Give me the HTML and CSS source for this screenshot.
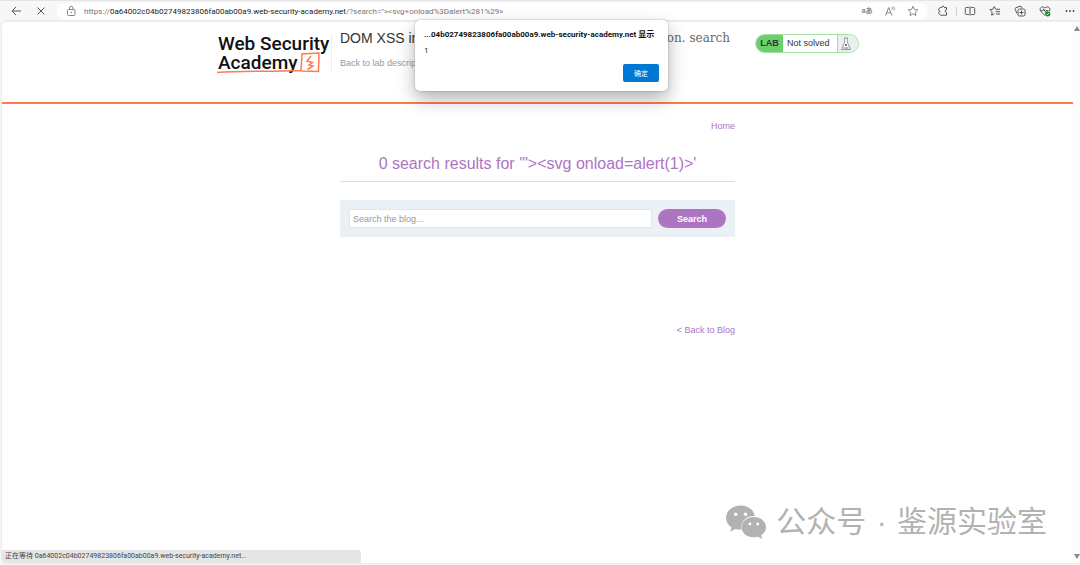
FILE: index.html
```html
<!DOCTYPE html>
<html lang="en">
<head>
    <meta charset="UTF-8">
    <meta name="viewport" content="width=device-width, initial-scale=1.0">
    <title>Web Security Academy</title>
    <link rel="stylesheet" href="styles.css">
</head>
<body>
    <div class="toolbar">
        <button class="tool back" aria-label="Back">
            <svg class="icon" viewBox="0 0 12 12"><path d="M11 6H2M6 2L2 6l4 4"/></svg>
        </button>
        <button class="tool stop" aria-label="Stop">
            <svg class="icon" viewBox="0 0 12 12"><path d="M2.500 2.500l7 7M9.500 2.500l-7 7"/></svg>
        </button>
        <div class="address">
            <svg class="icon lock" viewBox="0 0 12 12"><rect x="2.500" y="4.500" width="7.500" height="6" rx="1"/><path d="M4.500 4.500V3a1.700 1.700 0 0 1 3.400 0v1.500"/><circle cx="6.200" cy="7.500" r=".4"/></svg>
            <a class="url" href="#">https://<b>0a64002c04b02749823806fa00ab00a9.web-security-academy.net</b>/?search="&gt;&lt;svg+onload%3Dalert%281%29&gt;</a>
            <button class="tool translate" aria-label="Translate">aあ</button>
            <button class="tool" aria-label="Read aloud">
                <svg class="icon" viewBox="0 0 12 12"><path d="M1.500 10.500L4.700 2.500l3.300 8M2.500 7.800h4.500M7.500 2.300c.8.500.9 1.500.5 2.200M9 1.300c1.400 1 1.500 2.800.8 4"/></svg>
            </button>
            <button class="tool" aria-label="Favorite">
                <svg class="icon" viewBox="0 0 12 12"><path d="M6 1.300l1.400 3.100 3.400.4-2.500 2.300.7 3.400-3-1.700-3 1.700.7-3.400L1.200 4.800l3.400-.4z"/></svg>
            </button>
        </div>
        <div class="tools">
            <button class="tool" aria-label="Extensions">
                <svg class="icon" viewBox="0 0 12 12"><path d="M3 2.500h1.700c0-1.700 2.600-1.700 2.600 0h2.200v2.300c-1.800 0-1.800 2.600 0 2.600v2.800H3.500L1.800 8.500V7.200M3 2.500L1.700 4v1.200c1.600-.2 1.600 2 0 2"/></svg>
            </button>
            <span class="separator"></span>
            <button class="tool" aria-label="Split screen">
                <svg class="icon" viewBox="0 0 12 12"><path d="M4.800 2.500H2.300a1 1 0 0 0-1 1v5a1 1 0 0 0 1 1h2.500M7.200 2.500h2.500a1 1 0 0 1 1 1v5a1 1 0 0 1-1 1H7.200M6 1.300v9.400"/></svg>
            </button>
            <button class="tool" aria-label="Favorites">
                <svg class="icon" viewBox="0 0 12 12"><path d="M6.700 4.300L5.200 1.500 3.900 4.200.9 4.700l2.200 2.200-.4 3.300 2.600-1.400M7 4.300h4M6.500 6.700H11M7 9h4"/></svg>
            </button>
            <button class="tool" aria-label="Collections">
                <svg class="icon" viewBox="0 0 12 12"><path d="M3 8.500L1.200 4.400a1.300 1.300 0 0 1 .7-1.700L6 1.300a1.300 1.300 0 0 1 1.600.7l.4 1M7.500 5.500v4M5.500 7.500h4"/><rect x="4" y="4" width="7" height="7" rx="1.500"/></svg>
            </button>
            <button class="tool" aria-label="Browser essentials">
                <svg class="icon" viewBox="0 0 12 12"><path d="M6 10.500L1.600 6.200C-.3 3.800 3 .2 6 3c3-2.800 6.200.6 4.500 3M1.500 5.700h2.300l1-1.800 1.400 3 1-1.400h2"/><circle class="badge" cx="8.700" cy="8.800" r="2.600"/><path class="tick" d="M7.500 8.800l.9.900 1.500-1.600"/></svg>
            </button>
            <button class="tool" aria-label="More">
                <svg class="icon dots" viewBox="0 0 12 12"><circle cx="2.500" cy="6" r=".9"/><circle cx="6" cy="6" r=".9"/><circle cx="9.500" cy="6" r=".9"/></svg>
            </button>
        </div>
    </div>

    <div class="viewport">
        <div class="page">
            <header class="lab-header">
                <div class="lab-header-inner">
                    <a class="logo" href="#">
                        <span>Web Security</span>
                        <span>Academy</span>
                        <svg class="logo-mark" viewBox="0 0 112 22" aria-hidden="true"><path d="M1 20.500C28 18.500 52 20 85 18.500L86 2l17-1-.5 18.500L85 19"/><path d="M95 4l-4 5 5.500 1.500L93 13l4 1-5.500 3.500"/></svg>
                    </a>
                    <div class="title-container">
                        <h2><span>DOM XSS in</span><code>on. search</code></h2>
                        <a class="back-link" href="#">Back to lab descrip</a>
                    </div>
                    <div class="lab-status">
                        <span class="lab-tag">LAB</span>
                        <p>Not solved</p>
                        <span class="flask">
                            <svg viewBox="0 0 12 14"><path d="M4 1h4M4.700 1v4L1.500 12.500h9L7.300 5V1"/><path class="bubbles" d="M5 7l2 2M7 7L5 9M3.500 11h5"/></svg>
                        </span>
                    </div>
                </div>
            </header>
            <main class="container">
                <nav class="top-links"><a href="#">Home</a></nav>
                <section class="blog-header">
                    <h1>0 search results for '"&gt;&lt;svg onload=alert(1)&gt;'</h1>
                </section>
                <form class="search">
                    <input type="text" name="search" placeholder="Search the blog..." aria-label="Search the blog">
                    <button type="submit">Search</button>
                </form>
                <div class="back-to-blog"><a href="#">&lt; Back to Blog</a></div>
            </main>
        </div>
        <div class="scrollbar">
            <svg viewBox="0 0 6 5"><path d="M3 0l3 5H0z"/></svg>
            <svg viewBox="0 0 6 5"><path d="M0 0h6L3 5z"/></svg>
        </div>
        <div class="status-bubble">正在等待 0a64002c04b02749823806fa00ab00a9.web-security-academy.net...</div>
        <div class="watermark">
            <svg viewBox="0 0 42 34"><path d="M15 0C6.500 0 0 5.600 0 12.700c0 4 2.100 7.400 5.600 9.800L4.300 27l5.200-2.800c2 .6 4 .8 6.400.8C14 17 21 10.500 29.500 11 28.500 4.500 22.500 0 15 0z"/><path d="M28.500 12C21.500 12 16 16.500 16 22.300s5.500 10.400 12.500 10.400c1.500 0 3-.2 4.300-.6l4.400 2.200-1.200-3.700c3-2 5-4.800 5-8.300C41 16.500 35.500 12 28.500 12z"/><g class="eyes"><circle cx="10" cy="9" r="1.800"/><circle cx="20" cy="9" r="1.800"/><circle cx="24.500" cy="19" r="1.500"/><circle cx="32.500" cy="19" r="1.500"/></g></svg>
            <span>公众号<span class="dot"> · </span>鉴源实验室</span>
        </div>
    </div>

    <div class="dialog" role="alertdialog" aria-labelledby="dialog-title">
        <strong id="dialog-title">...04b02749823806fa00ab00a9.web-security-academy.net 显示</strong>
        <p>1</p>
        <button>确定</button>
    </div>
</body>
</html>
```
FILE: styles.css
```css
:root {
    --chrome: #f7f7f7;
    --purple: #ad74c3;
    --orange: #ff7a51;
    --ui-font: Roboto, "Noto Sans CJK SC", sans-serif;
}

* {
    box-sizing: border-box;
}

body {
    margin: 0;
    height: 100vh;
    display: flex;
    flex-direction: column;
    position: relative;
    overflow: hidden;
    background: var(--chrome);
    font-family: "Liberation Sans", Arial, sans-serif;
    font-size: 9px;
}

h1, h2, p {
    margin: 0;
    font-weight: normal;
}

a {
    color: var(--purple);
    text-decoration: none;
}

button {
    border: 0;
    padding: 0;
    cursor: pointer;
}

/* browser toolbar */
.toolbar {
    height: 21px;
    display: flex;
    align-items: center;
    padding: 0 4px 0 10px;
    border-top: 1px solid #e6e6e6;
}

.tool {
    width: 12px;
    height: 12px;
    background: none;
    display: flex;
    align-items: center;
    justify-content: center;
    flex: none;
}

.stop {
    margin: 0 10px 0 13px;
}

.icon {
    width: 12px;
    height: 12px;
    flex: none;
    fill: none;
    stroke: #555;
    stroke-width: 1;
}

.dots {
    fill: #444;
    stroke: none;
}

.badge {
    fill: #138a1c;
    stroke: none;
}

.tick {
    stroke: #fff;
}

.address {
    flex: 1;
    display: flex;
    align-items: center;
    gap: 11px;
    height: 17px;
    padding: 0 9px 0 8px;
    background: #fff;
    border-radius: 9px;
}

.address .icon {
    stroke: #888;
}

.url {
    flex: 1;
    margin-left: -4px;
    font: 8px/17px var(--ui-font);
    color: #777;
    white-space: nowrap;
}

.url b {
    font-weight: normal;
    color: #222;
}

.translate {
    font: bold 7px/12px "Open Sans", "Noto Sans CJK JP", sans-serif;
    color: #888;
}

.tools {
    display: flex;
    align-items: center;
    gap: 13px;
    margin-left: 9px;
}

.separator {
    width: 1px;
    height: 9px;
    margin: 0 -6px;
    background: #ccc;
}

/* page frame */
.viewport {
    flex: 1;
    display: flex;
    position: relative;
    margin: 0 0 2px 2px;
    background: #fff;
    border-top: 1px solid #eee;
    border-radius: 4px;
    box-shadow: 0 0 2px #ccc;
}

.page {
    flex: 1;
}

.scrollbar {
    width: 7px;
    display: flex;
    flex-direction: column;
    justify-content: space-between;
    align-items: center;
    padding: 4px 0;
    background: #fcfcfc;
}

.scrollbar svg {
    width: 6px;
    height: 5px;
    fill: #888;
}

/* lab header */
.lab-header {
    height: 82px;
    padding-top: 8px;
    border-bottom: 2px solid var(--orange);
}

.lab-header-inner {
    max-width: 643px;
    margin: 0 auto;
    display: flex;
    align-items: flex-start;
}

.logo {
    position: relative;
    width: 116px;
    height: 38px;
    margin-top: 4px;
    padding-left: 2px;
    border-right: 1px solid #eee;
    display: flex;
    flex-direction: column;
    color: #111;
    font: 500 19px/19px Roboto, sans-serif;
    white-space: nowrap;
}

.logo-mark {
    position: absolute;
    left: 0;
    bottom: -2px;
    width: 112px;
    height: 22px;
    fill: none;
    stroke: var(--orange);
    stroke-width: 1.5;
}

.title-container {
    flex: 1;
    padding: 0 25px 0 8px;
}

.title-container h2 {
    display: flex;
    justify-content: space-between;
    font-size: 14px;
    line-height: 16px;
    color: #333;
    margin-bottom: 11px;
}

.title-container code {
    font: 12px/16px "DejaVu Serif", serif;
    color: #666;
}

.back-link {
    display: block;
    line-height: 12px;
    color: #999;
}

.lab-status {
    display: flex;
    height: 19px;
    width: 104px;
    margin-top: 4px;
    border: 1px solid #a5e0a3;
    border-radius: 10px;
    overflow: hidden;
    line-height: 17px;
    color: #333;
}

.lab-tag {
    width: 27px;
    background: #6bd06b;
    font-weight: bold;
    text-align: center;
}

.lab-status p {
    flex: 1;
    padding-left: 4px;
}

.flask {
    width: 21px;
    display: flex;
    align-items: center;
    padding-left: 2px;
    background: #e9eef1;
    border-left: 1px solid #a5e0a3;
}

.flask svg {
    width: 12px;
    height: 14px;
    fill: #fff;
    stroke: #999;
    stroke-width: 1;
}

.flask .bubbles {
    stroke: #777;
}

/* blog content */
.container {
    max-width: 395px;
    margin: 0 auto;
}

.top-links {
    padding-top: 16px;
    line-height: 12px;
    text-align: right;
}

.blog-header {
    padding: 22px 0 7px;
    margin-bottom: 18px;
    border-bottom: 1px solid #ddd;
    text-align: center;
}

.blog-header h1 {
    font-size: 16px;
    line-height: 20px;
    color: var(--purple);
}

.search {
    display: flex;
    gap: 6px;
    padding: 9px;
    background: #eaf0f3;
}

.search input {
    flex: 1;
    height: 19px;
    padding: 0 3px;
    border: 1px solid #e3e6e8;
    font: 9px "Liberation Sans", Arial, sans-serif;
}

.search input::placeholder {
    color: #999;
}

.search button {
    width: 68px;
    height: 19px;
    border-radius: 10px;
    background: var(--purple);
    color: #fff;
    font: bold 9px "Liberation Sans", Arial, sans-serif;
}

.back-to-blog {
    margin-top: 87px;
    line-height: 12px;
    text-align: right;
}

/* overlays */
.status-bubble {
    position: absolute;
    left: 0;
    bottom: 0;
    width: 359px;
    height: 13px;
    padding-left: 3px;
    background: #e6e6e6;
    border-radius: 0 3px 0 4px;
    font: 7px/13px var(--ui-font);
    color: #444;
}

.watermark {
    position: absolute;
    right: 33px;
    bottom: 22px;
    display: flex;
    align-items: center;
    gap: 9px;
    font: 30px/38px "Liberation Sans", "Noto Sans CJK SC", sans-serif;
    color: #b2b2b2;
    white-space: nowrap;
}

.watermark svg {
    width: 41px;
    height: 34px;
    fill: #b2b2b2;
}

.watermark .eyes {
    fill: #fff;
}

.watermark .dot {
    padding: 0 2px;
}

.dialog {
    position: absolute;
    top: 20px;
    left: 50%;
    width: 253px;
    height: 71px;
    margin-left: -125px;
    padding: 9px;
    display: flex;
    flex-direction: column;
    background: #fff;
    border-radius: 5px;
    box-shadow: 0 8px 18px rgba(0, 0, 0, 0.3), 0 0 2px rgba(0, 0, 0, 0.3);
    font: 8px/12px var(--ui-font);
    color: #111;
}

.dialog p {
    margin-top: 3px;
    font-family: "Open Sans", sans-serif;
}

.dialog button {
    width: 36px;
    height: 18px;
    margin-top: auto;
    align-self: flex-end;
    border-radius: 2px;
    background: #0078d4;
    color: #fff;
    font: 7px var(--ui-font);
}
```
